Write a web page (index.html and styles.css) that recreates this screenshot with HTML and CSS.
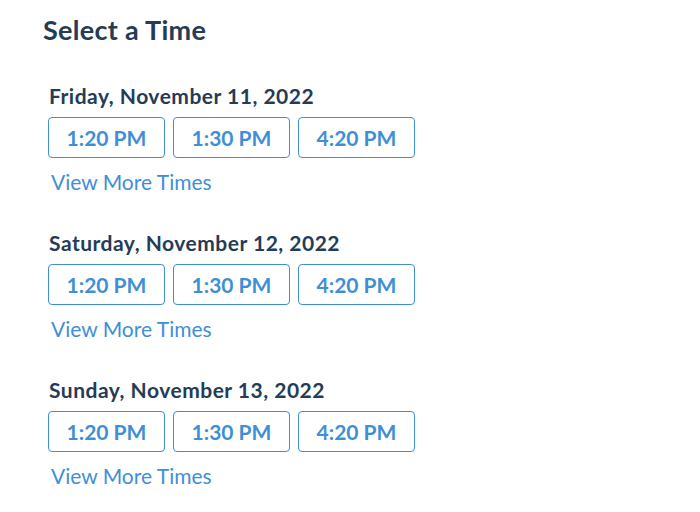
FILE: index.html
```html
<!DOCTYPE html>
<html>
<head>
<meta charset="utf-8">
<link rel="stylesheet" href="styles.css">
</head>
<body>
<div class="page">
  <h1 class="title">Select a Time</h1>
  <section class="day">
    <h2 class="date">Friday, November 11, 2022</h2>
    <div class="times">
      <button class="time">1:20 PM</button>
      <button class="time">1:30 PM</button>
      <button class="time">4:20 PM</button>
    </div>
    <a class="more" href="#">View More Times</a>
  </section>
  <section class="day">
    <h2 class="date">Saturday, November 12, 2022</h2>
    <div class="times">
      <button class="time">1:20 PM</button>
      <button class="time">1:30 PM</button>
      <button class="time">4:20 PM</button>
    </div>
    <a class="more" href="#">View More Times</a>
  </section>
  <section class="day">
    <h2 class="date">Sunday, November 13, 2022</h2>
    <div class="times">
      <button class="time">1:20 PM</button>
      <button class="time">1:30 PM</button>
      <button class="time">4:20 PM</button>
    </div>
    <a class="more" href="#">View More Times</a>
  </section>
</div>
</body>
</html>
```

FILE: styles.css
```css
html, body {
  margin: 0;
  padding: 0;
  background: #ffffff;
}
body {
  font-family: "Lato", "Liberation Sans", sans-serif;
  color: #253b56;
}
.page {
  padding: 12px 0 0 43px;
}
.title {
  margin: 0;
  font-size: 27px;
  font-weight: 700;
  line-height: 36px;
  letter-spacing: 0.3px;
  color: #253b56;
}
.day {
  padding-left: 5px;
  margin-top: 35px;
}
.day + .day {
  margin-top: 35px;
}
.date {
  margin: 0 0 0 1px;
  font-size: 21px;
  font-weight: 700;
  line-height: 26px;
  letter-spacing: 0.5px;
  color: #253b56;
}
.times {
  display: flex;
  gap: 8px;
  margin-top: 8px;
}
.time {
  width: 117px;
  height: 41px;
  box-sizing: border-box;
  border: 1.5px solid #3f8fd6;
  border-radius: 4px;
  background: #fff;
  color: #3f8fd6;
  font-family: inherit;
  font-size: 21px;
  font-weight: 700;
  padding: 0;
}
.more {
  display: block;
  margin: 11px 0 0 3px;
  font-size: 21px;
  line-height: 26px;
  color: #3f8fd6;
  text-decoration: none;
}
```
